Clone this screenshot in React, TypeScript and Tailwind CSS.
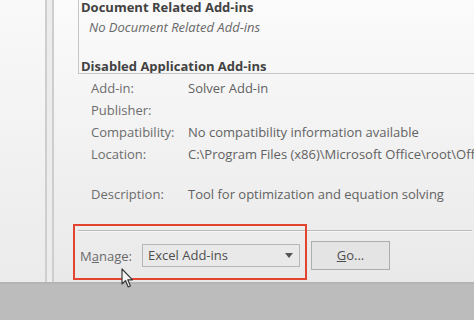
import type { ReactNode } from 'react';

const DETAILS: [string, string][] = [
  ['Add-in:', 'Solver Add-in'],
  ['Publisher:', ''],
  ['Compatibility:', 'No compatibility information available'],
  ['Location:', 'C:\\Program Files (x86)\\Microsoft Office\\root\\Office16\\Library\\SOLVER\\SOLVER.XLAM'],
];

function Row({ label, children, className = '' }: { label: string; children?: ReactNode; className?: string }) {
  return (
    <div className={`flex h-[22px] items-center whitespace-nowrap ${className}`}>
      <span className="w-[97px] shrink-0 text-[#6d6d6d]">{label}</span>
      <span className="text-[#626262]">{children}</span>
    </div>
  );
}

function Cursor() {
  return (
    <svg className="absolute left-[121px] top-[268px]" width="14" height="21" viewBox="0 0 14 21">
      <path
        d="M1 1 L1 16 L4.5 12.6 L7.2 19 L9.4 18 L6.8 11.8 L11.5 11.8 Z"
        fill="#f4f4f4"
        stroke="#3a3a3a"
        strokeWidth="1.2"
        strokeLinejoin="round"
      />
    </svg>
  );
}

export default function App() {
  return (
    <div className="relative flex h-[320px] w-[474px] flex-col overflow-hidden bg-linear-to-b from-[#c7c7c7] to-[#bbbbbb] font-['Open_Sans',sans-serif] text-[13px]">
      <div className="flex h-[284px] shrink-0 border-b-2 border-[#b4b4b4]">
        <div className="w-[45px] bg-linear-to-b from-[#f9f9f9] to-[#ebebeb]" />
        <div className="w-[9px] border-x-2 border-[#cecece] bg-[#ececec]" />

        <div className="flex min-w-0 flex-1 flex-col bg-linear-to-b from-[#fbfbfb] to-[#e9e9e9]">
          {/* add-in list, scrolled to its end */}
          <div className="ml-[24px] h-[74px] shrink-0 overflow-hidden border-b border-l border-[#c6c6c6] pl-[2px]">
            <div className="-mt-[3px] whitespace-nowrap font-bold leading-[20px] text-[#424242]">Document Related Add-ins</div>
            <div className="whitespace-nowrap pl-[8px] italic leading-[20px] text-[#686868]">No Document Related Add-ins</div>
            <div className="mt-[19px] whitespace-nowrap font-bold leading-[20px] text-[#424242]">Disabled Application Add-ins</div>
          </div>

          <div className="ml-[37px] mt-[4px]">
            {DETAILS.map(([label, value]) => (
              <Row key={label} label={label}>{value}</Row>
            ))}
            <Row label="Description:" className="mt-[18px]">Tool for optimization and equation solving</Row>
          </div>

          <div className="ml-[24px] mr-[2px] mt-[24px] h-[2px] border-b border-t border-b-[#f6f6f6] border-t-[#bababa]" />

          <div className="ml-[26px] mt-[9px] flex items-center">
            <span className="w-[62px] pt-[2px] text-[#6a6a6a]">
              M<span className="underline">a</span>nage:
            </span>
            <div className="flex h-[23px] w-[158px] items-center justify-between border border-[#b7b7b7] bg-[#e9e9e9] pl-[5px] pr-[6px] text-[#4e4e4e]">
              <span>Excel Add-ins</span>
              <svg width="8" height="5" viewBox="0 0 8 5">
                <path d="M0 0 H8 L4 5 Z" fill="#555555" />
              </svg>
            </div>
            <button className="ml-[11px] flex h-[29px] w-[79px] items-center justify-center border border-[#adadad] bg-[#e4e4e4] text-[#4e4e4e]">
              <span>
                <span className="underline">G</span>o...
              </span>
            </button>
          </div>
        </div>
      </div>

      <div className="pointer-events-none absolute left-[73px] top-[224px] h-[56px] w-[234px] border-2 border-[#e2442f]" />
      <Cursor />
    </div>
  );
}
